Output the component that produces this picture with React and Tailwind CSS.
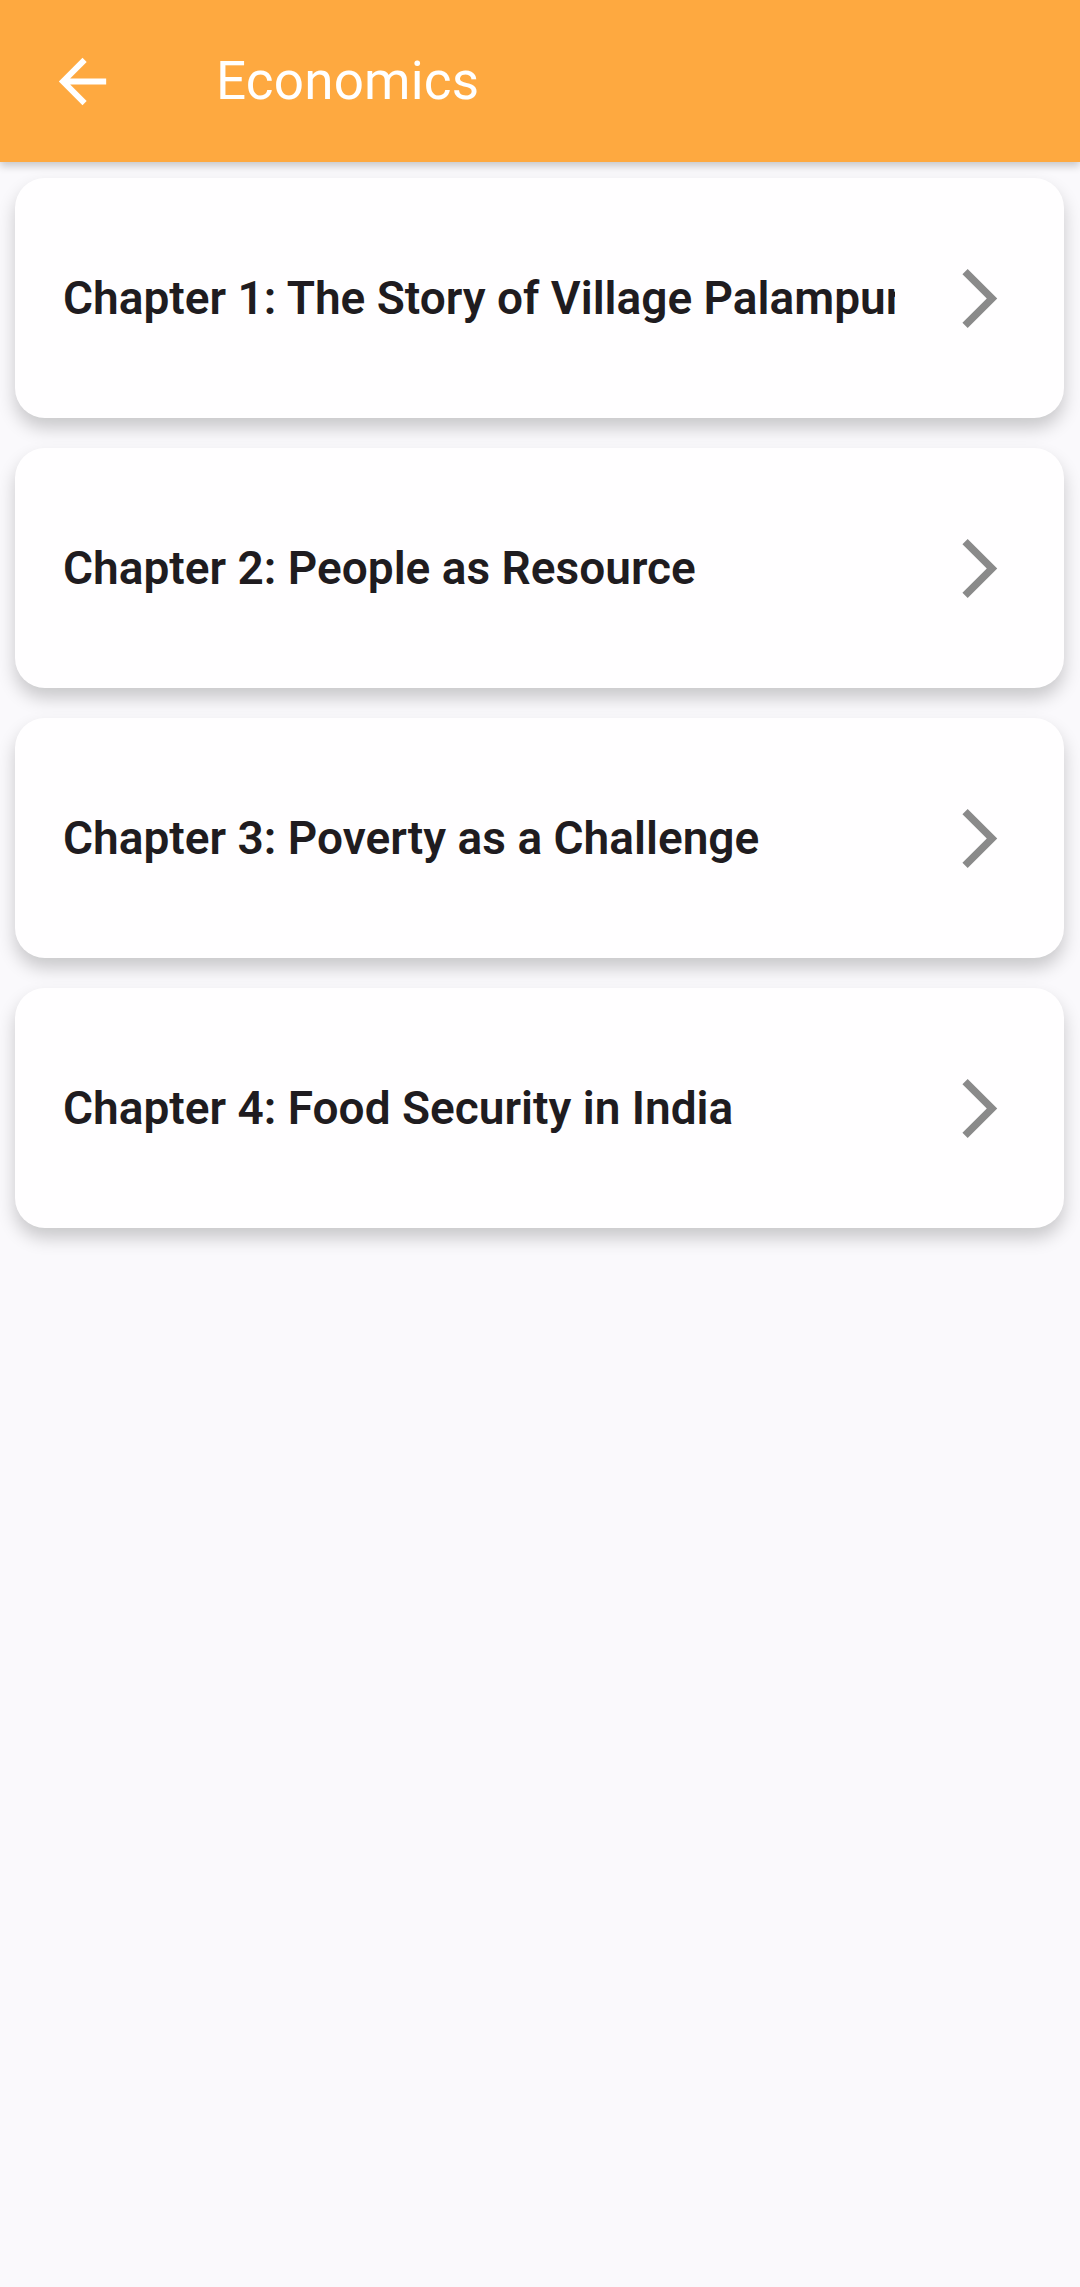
import React from "react";

const chapters = [
  "Chapter 1: The Story of Village Palampur",
  "Chapter 2: People as Resource",
  "Chapter 3: Poverty as a Challenge",
  "Chapter 4: Food Security in India",
];

function Chevron() {
  return (
    <svg viewBox="0 0 24 24" className="w-[71px] h-[71px] shrink-0" fill="#8a8a8a">
      <path d="M6.23 20.23L8 22l10-10L8 2 6.23 3.77 14.46 12z" />
    </svg>
  );
}

export default function App() {
  return (
    <div
      className="min-h-[2287px] w-[1080px] bg-[#faf9fc]"
      style={{ fontFamily: "Roboto, 'Noto Sans', sans-serif" }}
    >
      <header className="relative z-10 h-[162px] bg-[#fea940] flex items-center shadow-[0_4px_8px_rgba(0,0,0,0.2)]">
        <div className="ml-[47px] w-[71px] h-[71px] flex items-center justify-center">
          <svg viewBox="0 0 24 24" className="w-[71px] h-[71px]" fill="#ffffff">
            <path d="M20 11H7.83l5.59-5.59L12 4l-8 8 8 8 1.41-1.41L7.83 13H20v-2z" />
          </svg>
        </div>
        <h1 className="ml-[98px] text-white text-[53px] font-normal leading-[1.3] tracking-[0.2px]">
          Economics
        </h1>
      </header>
      <main className="flex flex-col gap-[30px] px-[15px] pt-[16px]">
        {chapters.map((c) => (
          <div
            key={c}
            className="h-[240px] w-[1049px] bg-[#fffeff] rounded-[30px] flex items-center shadow-[0_10px_18px_rgba(0,0,0,0.2)]"
          >
            <div className="ml-[48px] w-[832px] overflow-hidden whitespace-nowrap text-[46px] font-semibold text-[#1f1c20] leading-[1.4]">
              {c}
            </div>
            <div className="ml-[49px]">
              <Chevron />
            </div>
          </div>
        ))}
      </main>
    </div>
  );
}
